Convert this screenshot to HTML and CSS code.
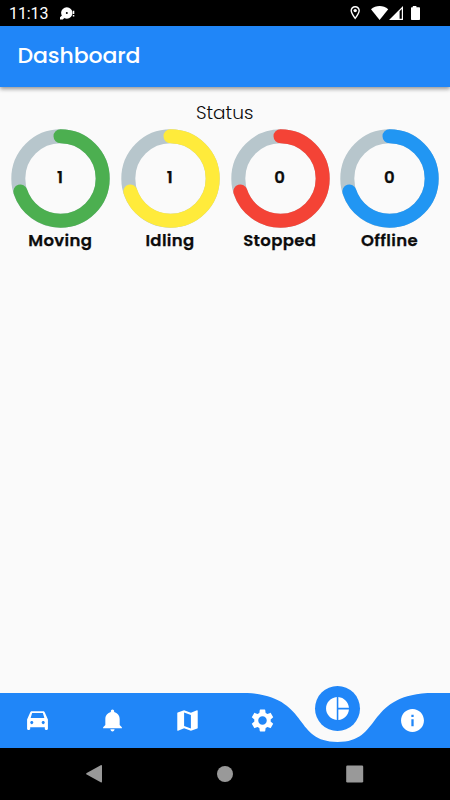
FILE: index.html
```html
<!DOCTYPE html>
<html lang="en">
<head>
<meta charset="utf-8">
<title>Dashboard</title>
<link rel="stylesheet" href="styles.css">
</head>
<body>
<div class="screen">
  <div class="statusbar">
    <span class="clock">11:13</span>
    <svg class="notification" width="16" height="14" viewBox="0 0 16 14"><circle cx="7.800" cy="6" r="5.700" fill="#fff"/><circle cx="7.800" cy="5.900" r="1" fill="#000"/><path d="M3 8.500L1 10.300v2.200h2.800l1.700-1.700zM13.800 3.700h1.500v3.400h-1.500zm0 4.300h1.500v1.400h-1.500z" fill="#fff"/></svg>
    <svg class="system" width="72" height="16" viewBox="0 0 72 16" fill="#fff">
      <path fill-rule="evenodd" d="M5.200 1C2.500 1 .5 3 .5 5.600c0 3.400 4.700 9 4.700 9s4.700-5.600 4.700-9C9.900 3 7.900 1 5.200 1zm0 1.400c1.900 0 3.300 1.400 3.300 3.200 0 1.900-1.900 4.800-3.300 6.700C3.800 10.400 1.900 7.500 1.900 5.600c0-1.800 1.400-3.200 3.300-3.200z"/>
      <circle cx="5.200" cy="5.600" r="1.700"/>
      <path d="M21 4.300C26-.1 33.200-.1 38.200 4.300L29.600 15z"/>
      <path fill-rule="evenodd" d="M53 1v14H39zm-3.400 5.300V13.800h2.200V4z"/>
      <path d="M62.800 1h3.600v1.300H69c.6 0 1 .4 1 1V14c0 .6-.4 1-1 1h-7c-.6 0-1-.4-1-1V3.300c0-.6.4-1 1-1h.8z"/>
    </svg>
  </div>
  <header class="appbar"><h1>Dashboard</h1></header>
  <main>
    <h2>Status</h2>
    <div class="gauges">
      <section class="gauge moving"><div class="dial"><svg viewBox="0 0 99 99"><circle class="track" cx="49.500" cy="49.500" r="42.200"/><circle class="value" cx="49.500" cy="49.500" r="42.200" pathLength="100" transform="rotate(-90 49.500 49.500)"/></svg><strong>1</strong></div><span class="label">Moving</span></section>
      <section class="gauge idling"><div class="dial"><svg viewBox="0 0 99 99"><circle class="track" cx="49.500" cy="49.500" r="42.200"/><circle class="value" cx="49.500" cy="49.500" r="42.200" pathLength="100" transform="rotate(-90 49.500 49.500)"/></svg><strong>1</strong></div><span class="label">Idling</span></section>
      <section class="gauge stopped"><div class="dial"><svg viewBox="0 0 99 99"><circle class="track" cx="49.500" cy="49.500" r="42.200"/><circle class="value" cx="49.500" cy="49.500" r="42.200" pathLength="100" transform="rotate(-90 49.500 49.500)"/></svg><strong>0</strong></div><span class="label">Stopped</span></section>
      <section class="gauge offline"><div class="dial"><svg viewBox="0 0 99 99"><circle class="track" cx="49.500" cy="49.500" r="42.200"/><circle class="value" cx="49.500" cy="49.500" r="42.200" pathLength="100" transform="rotate(-90 49.500 49.500)"/></svg><strong>0</strong></div><span class="label">Offline</span></section>
    </div>
  </main>
  <nav class="tabs">
    <svg class="curve" width="450" height="55" viewBox="0 0 450 55"><path fill="#2086f8" d="M0 0H247.500C310.500 4.100 292.500 49 337.500 49S364.500 4.100 427.500 0H450V55H0z"/></svg>
    <a class="tab"><svg viewBox="0 0 24 24"><path d="M18.920 4.010C18.720 3.420 18.160 3 17.500 3h-11c-.66 0-1.210.42-1.420 1.010L2 11v9c0 .55.45 1 1 1h1c.55 0 1-.45 1-1v-1.500h14V20c0 .55.45 1 1 1h1c.55 0 1-.45 1-1v-9l-3.080-6.990zM6.850 4.700h10.290l1.440 5H5.410l1.440-5zM6.500 15.500c-.83 0-1.500-.67-1.500-1.500s.67-1.500 1.500-1.500S8 13.170 8 14s-.67 1.500-1.500 1.500zm11 0c-.83 0-1.500-.67-1.500-1.500s.67-1.500 1.500-1.500 1.500.67 1.500 1.500-.67 1.500-1.500 1.500z"/></svg></a>
    <a class="tab"><svg viewBox="0 0 24 24"><path d="M10.010 21.010c0 1.100.89 1.990 1.990 1.990s1.990-.89 1.990-1.990h-3.980zm8.870-4.190V11c0-3.250-2.250-5.970-5.290-6.690v-.72C13.590 2.710 12.880 2 12 2s-1.590.71-1.590 1.590v.72C7.370 5.030 5.120 7.750 5.120 11v5.820L3 18.940V20h18v-1.060l-2.120-2.120z" transform="translate(0 -.5)"/></svg></a>
    <a class="tab"><svg viewBox="0 0 24 24"><path d="M20.500 3l-.16.03L15 5.100 9 3 3.360 4.900c-.21.07-.36.25-.36.48V20.500c0 .28.22.5.5.5l.16-.03L9 18.900l6 2.100 5.640-1.900c.21-.07.36-.25.36-.48V3.500c0-.28-.22-.5-.5-.5zM15 19l-6-2.110V5l6 2.110V19z" transform="translate(-1.080 -1.080) scale(1.090)"/></svg></a>
    <a class="tab"><svg viewBox="0 0 24 24"><path d="M19.430 12.980c.04-.32.07-.64.07-.98s-.03-.66-.07-.98l2.110-1.650c.19-.15.24-.42.12-.64l-2-3.460c-.12-.22-.39-.3-.61-.22l-2.490 1c-.52-.4-1.080-.73-1.690-.98l-.38-2.650C14.460 2.180 14.250 2 14 2h-4c-.25 0-.46.18-.49.42l-.38 2.650c-.61.25-1.170.59-1.690.98l-2.490-1c-.23-.09-.49 0-.61.22l-2 3.460c-.13.22-.07.49.12.64l2.110 1.650c-.04.32-.07.65-.07.98s.03.66.07.98l-2.110 1.650c-.19.15-.24.42-.12.64l2 3.460c.12.22.39.3.61.22l2.490-1c.52.4 1.080.73 1.690.98l.38 2.650c.03.24.24.42.49.42h4c.25 0 .46-.18.49-.42l.38-2.650c.61-.25 1.170-.59 1.690-.98l2.490 1c.23.09.49 0 .61-.22l2-3.460c.12-.22.07-.49-.12-.64l-2.110-1.650zM12 15.900c-2.150 0-3.900-1.750-3.900-3.900s1.750-3.900 3.900-3.900 3.900 1.750 3.900 3.900-1.750 3.900-3.900 3.900z" transform="translate(-.6 -.6) scale(1.050)"/></svg></a>
    <a class="tab"><span class="active"><svg viewBox="0 0 24 24"><path d="M11.300 1v22C5.600 22.500 1 17.700 1 12S5.600 1.500 11.300 1zM12.800 1v10.300H23C22.500 5.900 18.200 1.500 12.800 1zM12.800 12.900V23c5.400-.5 9.700-4.700 10.200-10.100z"/></svg></span></a>
    <a class="tab"><svg viewBox="0 0 24 24"><path d="M12 1C5.930 1 1 5.930 1 12s4.930 11 11 11 11-4.930 11-11S18.070 1 12 1zm1.100 16.500h-2.200v-6.600h2.200v6.600zm0-8.800h-2.200V6.500h2.200v2.200z"/></svg></a>
  </nav>
  <footer class="system-nav">
    <svg width="18" height="20" viewBox="0 0 18 20"><path d="M.7 9.100L14.700 1.200Q16 .6 16 2v15.500q0 1.300-1.300.7L.7 10.600Q-.5 9.900 .7 9.100z"/></svg>
    <svg width="18" height="18" viewBox="0 0 18 18"><circle cx="9" cy="9" r="8"/></svg>
    <svg width="18" height="18" viewBox="0 0 18 18"><rect x=".2" y=".5" width="17" height="17" rx="1.200"/></svg>
  </footer>
</div>
</body>
</html>
```
FILE: styles.css
```css
* { box-sizing: border-box; }
body { margin: 0; }
.screen {
  width: 450px;
  height: 800px;
  display: flex;
  flex-direction: column;
  overflow: hidden;
  background: #fafafa;
  color: #0c0c0c;
  font-family: Poppins, Inter, sans-serif;
}
.statusbar {
  height: 26px;
  flex: none;
  display: flex;
  align-items: center;
  padding: 0 28.500px 0 9px;
  background: #000;
  color: #fff;
}
.clock { width: 50px; font: 16px/26px Roboto, sans-serif; padding-top: 2px; letter-spacing: -.1px; }
.notification { margin-top: 1px; }
.system { margin-left: auto; }
.appbar {
  height: 61px;
  flex: none;
  padding-left: 17.500px;
  background: #2086f8;
  color: #fff;
  box-shadow: 0 2px 4px rgba(0,0,0,.3), 0 1px 5px rgba(0,0,0,.18);
}
h1 { margin: 0; font-size: 22px; line-height: 59px; font-weight: 500; letter-spacing: -.1px; }
main { flex: 1; padding: 13px 5.350px 0 5.650px; }
h2 { margin: 0; font-size: 18.500px; line-height: 26px; height: 28.600px; font-weight: 300; text-align: center; letter-spacing: 0; padding-right: 1px; }
.gauges { display: grid; grid-template-columns: repeat(4, 1fr); }
.gauge { display: flex; flex-direction: column; align-items: center; }
.dial { display: grid; width: 99px; height: 99px; place-items: center; }
.dial > * { grid-area: 1 / 1; }
.dial svg { width: 100%; height: 100%; fill: none; stroke-width: 14; }
.dial strong { font-size: 16.500px; font-weight: 600; line-height: 20px; margin: -1px 1px 0 0; -webkit-text-stroke: .25px; }
.track { stroke: #b7c6cc; }
.value { stroke: currentColor; stroke-linecap: round; stroke-dasharray: 70 100; }
.moving svg { color: #4caf50; }
.idling svg { color: #ffeb3b; }
.stopped svg { color: #f44336; }
.offline svg { color: #2196f3; }
.label { font-size: 16.500px; line-height: 25px; font-weight: 600; letter-spacing: .35px; padding-right: .5px; -webkit-text-stroke: .25px; }
.tabs { position: relative; height: 55px; flex: none; display: grid; grid-template-columns: repeat(6, 1fr); }
.curve { position: absolute; left: 0; top: 0; }
.tab { position: relative; display: flex; align-items: center; justify-content: center; padding-bottom: 1px; }
.tab svg { width: 25px; height: 25px; fill: #fff; }
.active { position: relative; top: -11.500px; flex: none; width: 45px; height: 45px; border-radius: 50%; background: #2086f8; display: flex; align-items: center; justify-content: center; }
.system-nav { height: 52px; flex: none; background: #000; display: grid; grid-template-columns: 130px 130px 130px; justify-content: center; place-items: center; fill: #999; }
```
